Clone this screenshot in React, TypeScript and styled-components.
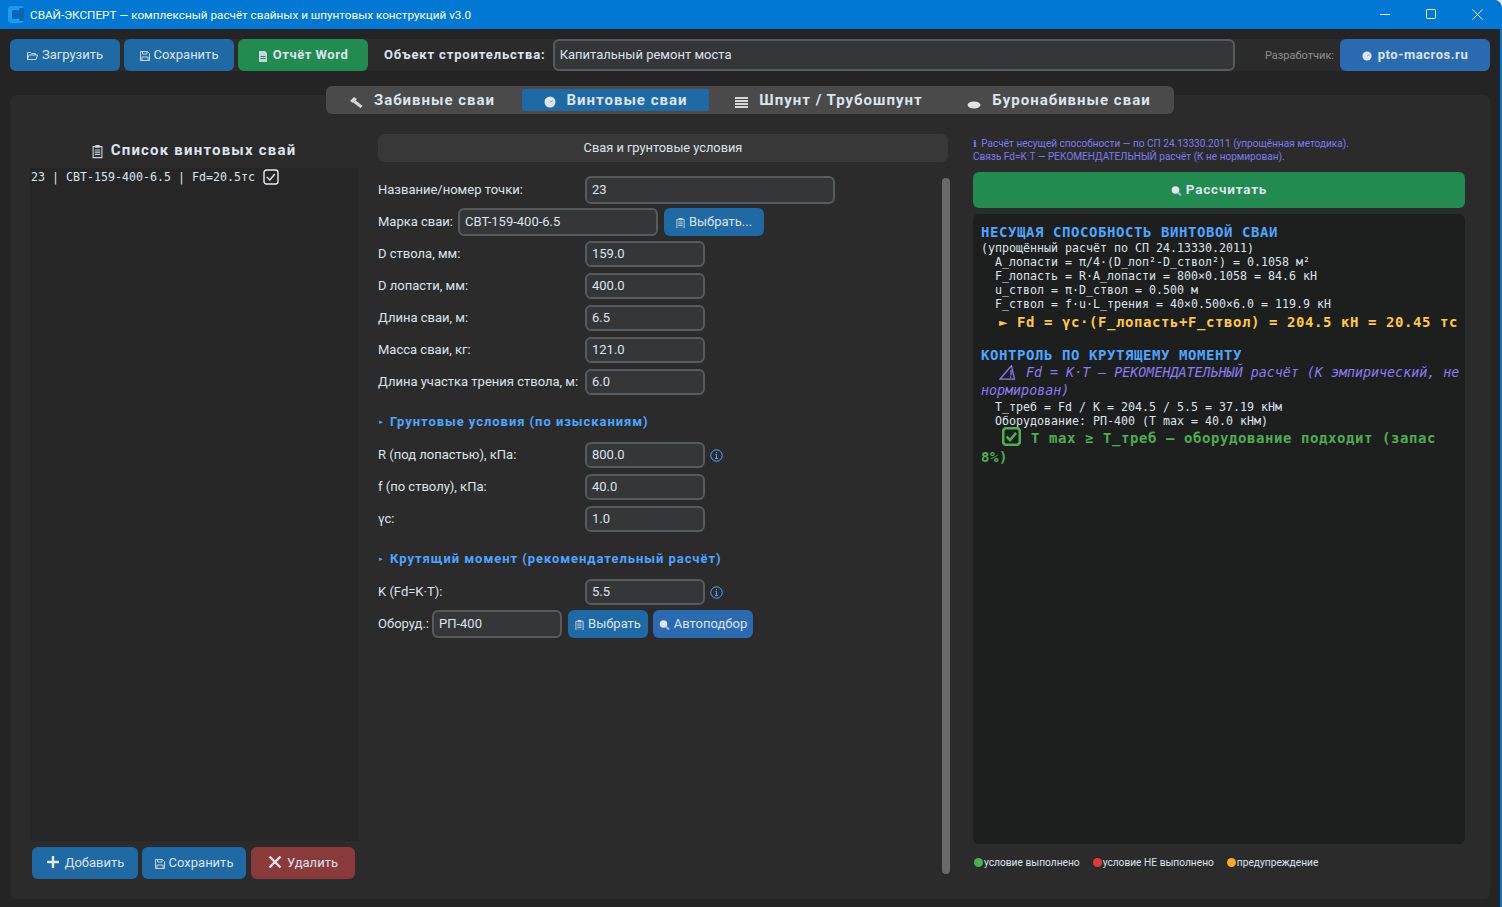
import styled, { createGlobalStyle } from "styled-components";

// Types
type ButtonTone = "blue" | "green" | "red" | "link";

// Global
const GlobalStyle = createGlobalStyle`
  html, body {
    margin: 0;
    padding: 0;
    background: #e8e8e8;
    overflow: hidden;
  }
  * {
    box-sizing: border-box;
  }
`;

const toneColors: Record<ButtonTone, string> = {
  blue: "#1f6aa5",
  green: "#228b4f",
  red: "#8b3a3a",
  link: "#2a6ab0",
};

// Window
const Window = styled.div`
  width: 1502px;
  height: 907px;
  display: flex;
  flex-direction: column;
  background: #242424;
  border-right: 2px solid #0078d4;
  border-top-right-radius: 8px;
  color: #dce4ee;
  font-family: Roboto, "Liberation Sans", sans-serif;
  font-size: 13px;
  overflow: hidden;
`;

const TitleBar = styled.div`
  height: 29px;
  flex: none;
  display: flex;
  align-items: center;
  background: #0078d4;
  color: #fff;
  font-size: 11.72px;
  padding-left: 8px;
`;

const TitleText = styled.span`
  margin-left: 6px;
  flex: 1;
`;

const WinControl = styled.div`
  width: 46px;
  height: 29px;
  display: flex;
  align-items: center;
  justify-content: center;
`;

// Toolbar
const Toolbar = styled.div`
  height: 32px;
  margin: 10px 10px 0 10px;
  flex: none;
  display: flex;
  align-items: center;
  background: #2b2b2b;
  border-radius: 6px;
`;

const Button = styled.button<{ $tone: ButtonTone; $w: number; $h?: number; $bold?: boolean; $gap?: number }>`
  width: ${(p) => p.$w}px;
  height: ${(p) => p.$h ?? 32}px;
  flex: none;
  display: flex;
  align-items: center;
  justify-content: center;
  gap: ${(p) => p.$gap ?? 4}px;
  padding: 0 0 2px;
  border: none;
  border-radius: 6px;
  background: ${(p) => toneColors[p.$tone]};
  color: #dce4ee;
  font-family: inherit;
  font-size: 13px;
  font-weight: ${(p) => (p.$bold ? 700 : 400)};
  letter-spacing: ${(p) => (p.$bold ? "0.55px" : "0")};
`;

const DeleteButton = styled(Button)`
  margin-left: 1px;
`;

const CalcButton = styled(Button)`
  font-size: 13.5px;
  letter-spacing: 0.8px;
`;

const Spacer = styled.div<{ $w: number }>`
  width: ${(p) => p.$w}px;
  flex: none;
`;

const ObjectLabel = styled.span`
  font-weight: 700;
  letter-spacing: 0.85px;
  margin-left: 16px;
  margin-right: 7px;
  padding-bottom: 2px;
  white-space: nowrap;
`;

const Input = styled.div<{ $w?: number; $h?: number }>`
  width: ${(p) => (p.$w ? `${p.$w}px` : "auto")};
  height: ${(p) => p.$h ?? 26}px;
  flex: ${(p) => (p.$w ? "none" : "1")};
  display: flex;
  align-items: center;
  padding: 0 5px 1px;
  background: #343638;
  border: 2px solid #565b5e;
  border-radius: 6px;
  color: #dce4ee;
`;

const DevLabel = styled.span`
  font-size: 11px;
  color: #8f8f8f;
  margin-left: 30px;
  margin-right: 6px;
`;

// Tabs
const TabBar = styled.div`
  height: 28px;
  width: 848px;
  flex: none;
  margin: 15px 0 -19px 326px;
  position: relative;
  z-index: 1;
  display: flex;
  align-items: center;
  gap: 4px;
  background: #4a4a4a;
  border-radius: 6px;
`;

const Tab = styled.div<{ $w: number; $active?: boolean }>`
  width: ${(p) => p.$w}px;
  height: 22px;
  flex: none;
  display: flex;
  align-items: center;
  justify-content: center;
  gap: 11px;
  border-radius: 2px;
  background: ${(p) => (p.$active ? "#1f6aa5" : "transparent")};
  font-size: 15px;
  font-weight: 700;
  letter-spacing: 1px;
`;

// Main panel
const MainPanel = styled.div`
  width: 1480px;
  height: 804px;
  margin-left: 10px;
  flex: none;
  background: #2b2b2b;
  border-radius: 6px;
  padding: 39px 25px 20px 20px;
  display: grid;
  grid-template-columns: 328px 575px 492px;
  column-gap: 20px;
`;

const Column = styled.div`
  display: flex;
  flex-direction: column;
  min-height: 0;
`;

// Left column
const ListTitle = styled.div`
  height: 34px;
  flex: none;
  display: flex;
  align-items: center;
  justify-content: center;
  gap: 8px;
  padding-bottom: 2px;
  font-size: 15px;
  font-weight: 700;
  letter-spacing: 1.2px;
`;

const PileList = styled.div`
  flex: 1;
  background: #262626;
  padding: 1px 1px;
`;

const PileItem = styled.div`
  display: flex;
  align-items: center;
  gap: 8px;
  height: 16px;
  font-family: "DejaVu Sans Mono", monospace;
  font-size: 11.64px;
`;

const ListButtons = styled.div`
  height: 32px;
  flex: none;
  margin-top: 6px;
  padding-left: 2px;
  display: flex;
  gap: 4px;
`;

// Middle column
const MiddleColumn = styled(Column)`
  padding-right: 3px;
`;

const SectionHeader = styled.div`
  width: 570px;
  height: 28px;
  flex: none;
  display: flex;
  align-items: center;
  justify-content: center;
  padding-bottom: 1px;
  background: #383838;
  border-radius: 6px;
  font-size: 12.8px;
`;

const ScrollArea = styled.div`
  flex: 1;
  display: flex;
  min-height: 0;
  padding-top: 15px;
`;

const Form = styled.div`
  flex: 1;
  display: flex;
  flex-direction: column;
  gap: 6px;
`;

const FieldRow = styled.div<{ $tall?: boolean }>`
  height: ${(p) => (p.$tall ? 28 : 26)}px;
  flex: none;
  display: flex;
  align-items: center;
  margin: ${(p) => (p.$tall ? "-1px 0" : "0")};
`;

const FieldLabel = styled.span<{ $w: number }>`
  width: ${(p) => p.$w}px;
  flex: none;
  padding-bottom: 1px;
  white-space: nowrap;
`;

const FormHeading = styled.div`
  height: 20px;
  flex: none;
  margin: 10px 0 5px;
  display: flex;
  align-items: center;
  gap: 6px;
  color: #4da6ff;
  font-weight: 700;
  letter-spacing: 0.95px;
`;

const HeadingArrow = styled.span`
  font-size: 6px;
  width: 6px;
`;

const ScrollThumb = styled.div`
  width: 8px;
  height: 696px;
  flex: none;
  margin-top: 1px;
  background: #6a6a6a;
  border-radius: 4px;
`;

// Right column
const InfoNote = styled.div`
  height: 38px;
  flex: none;
  padding-top: 3px;
  color: #7b7bf0;
  font-size: 10.05px;
  line-height: 13px;
`;

const InfoMark = styled.b`
  font-family: "DejaVu Serif", serif;
  margin-right: 2px;
`;

const ResultBox = styled.div`
  height: 630px;
  flex: none;
  margin-top: 6px;
  padding: 10px 4px 10px 8px;
  background: #1d1e1e;
  border-radius: 6px;
  font-family: "DejaVu Sans Mono", monospace;
  font-size: 11.64px;
`;

const ResultHeading = styled.div<{ $gap?: boolean }>`
  margin-top: ${(p) => (p.$gap ? 16 : 0)}px;
  margin-bottom: ${(p) => (p.$gap ? 0 : 1)}px;
  color: #4da6ff;
  font-size: 14px;
  font-weight: 700;
  letter-spacing: 0.57px;
  line-height: 16px;
`;

const ResultLine = styled.div<{ $indent?: boolean }>`
  height: 14px;
  line-height: 14px;
  padding-left: ${(p) => (p.$indent ? 14 : 0)}px;
  white-space: pre;
  color: #dce4ee;
`;

const ResultTotal = styled.div`
  margin-top: 2px;
  padding-left: 18px;
  color: #ffc845;
  font-size: 14px;
  font-weight: 700;
  letter-spacing: 0.57px;
  line-height: 18px;
  white-space: nowrap;
`;

const ResultWarning = styled.div`
  color: #8a7bf0;
  font-size: 13.33px;
  font-style: italic;
  line-height: 18px;
  margin-top: 1px;
  text-indent: 18px;
`;

const ResultOk = styled.div`
  color: #4caf50;
  font-size: 14px;
  font-weight: 700;
  letter-spacing: 0.57px;
  line-height: 19px;
  padding-top: 1px;
  padding-right: 4px;
  text-indent: 21px;
`;

const InlineGlyph = styled.span<{ $space: number }>`
  display: inline-block;
  vertical-align: -3px;
  margin: -6px ${(p) => p.$space}px -6px 0;
  text-indent: 0;
  line-height: 0;
`;

const Legend = styled.div`
  flex: 1;
  display: flex;
  align-items: center;
  font-size: 10.2px;
  gap: 13px;
  padding: 2px 0 0 1px;
`;

const LegendItem = styled.div`
  display: flex;
  align-items: center;
  gap: 1px;
`;

const LegendDot = styled.span<{ $color: string }>`
  width: 9px;
  height: 9px;
  flex: none;
  border-radius: 50%;
  background: ${(p) => p.$color};
`;

// Icons
const iconColor = "#c9d6e2";

const LowIcon = styled.svg`
  flex: none;
  margin-top: 4px;
`;

const BoreSvg = styled(LowIcon)`
  margin-top: 9px;
`;

const AppLogo = () => (
  <svg width="16" height="17" viewBox="0 0 16 17">
    <rect x="0" y="0" width="16" height="17" rx="4" fill="#1a9cf5" />
    <rect x="11" y="2" width="5" height="13" rx="1" fill="#0f62b0" />
    <rect x="4" y="4" width="7" height="9" rx="1.500" fill="#0a66bc" />
  </svg>
);

const FolderIcon = () => (
  <LowIcon width="11" height="10" viewBox="0 0 11 10" fill="none" stroke={iconColor} strokeWidth="1">
    <path d="M.5 8.500v-7h3l1 1h4v1.500M.5 8.500l1.500-4.500h8.500l-1.500 4.500z" />
  </LowIcon>
);

const SaveIcon = () => (
  <LowIcon width="10" height="10" viewBox="0 0 10 10" fill="none" stroke={iconColor} strokeWidth="1">
    <path d="M.5.500h7l2 2v7h-9z" />
    <path d="M2.500.500v2.500h4.500v-2.500M2 9.500v-3.500h6v3.500" />
  </LowIcon>
);

const DocIcon = () => (
  <LowIcon width="10" height="11" viewBox="0 0 10 11">
    <path d="M1 0h6l2 2v9H1z" fill={iconColor} />
    <path d="M2.500 5.500h5M2.500 7.500h5" stroke="#228b4f" strokeWidth="1" />
  </LowIcon>
);

const ClipboardIcon = ({ size = 9 }: { size?: number }) => (
  <LowIcon width={size} height={size * 1.2} viewBox="0 0 10 12">
    <path d="M1 1.500h8v10H1z" fill="none" stroke={iconColor} strokeWidth="1" />
    <rect x="3" y="0" width="4" height="2.500" fill={iconColor} />
    <path d="M2.500 4.500h5M2.500 6.500h5M2.500 8.500h5" stroke={iconColor} strokeWidth="1" />
  </LowIcon>
);

const HammerIcon = () => (
  <LowIcon width="14" height="12" viewBox="0 0 14 12">
    <path d="M1 5l4-4 3 2-4 4z" fill="#d8d8d8" />
    <path d="M5.500 5.500l7 5.500" stroke="#d8d8d8" strokeWidth="3" />
  </LowIcon>
);

const DiscIcon = ({ size = 12 }: { size?: number }) => (
  <LowIcon width={size} height={size} viewBox="0 0 12 12">
    <circle cx="6" cy="6" r="5.500" fill="#dfe6ee" />
    <path d="M6 6l3-1" stroke="#8aa0b4" strokeWidth="1" />
  </LowIcon>
);

const SheetIcon = () => (
  <LowIcon width="13" height="11" viewBox="0 0 13 11">
    <path d="M0 1h13M0 4h13M0 7h13M0 10h13" stroke="#d8d8d8" strokeWidth="2.200" />
  </LowIcon>
);

const BoreIcon = () => (
  <BoreSvg width="14" height="8" viewBox="0 0 14 8">
    <ellipse cx="7" cy="4" rx="6.500" ry="3.500" fill="#e4e4e4" />
  </BoreSvg>
);

const SearchIcon = () => (
  <LowIcon width="11" height="10" viewBox="0 0 11 10">
    <circle cx="4.500" cy="4" r="3.800" fill="#dfe6ee" />
    <path d="M7 6.500l3 3" stroke="#a8b8c6" strokeWidth="2" />
  </LowIcon>
);

const PlusIcon = () => (
  <svg width="14" height="14" viewBox="0 0 14 14">
    <path d="M7 1v12M1 7h12" stroke="#e4ecf4" strokeWidth="2.400" />
  </svg>
);

const CrossIcon = () => (
  <svg width="14" height="14" viewBox="0 0 14 14">
    <path d="M1.500 1.500l11 11M12.500 1.500l-11 11" stroke="#e8e4e8" strokeWidth="2.400" />
  </svg>
);

const InfoIcon = () => (
  <svg width="13" height="13" viewBox="0 0 13 13" fill="none" stroke="#4da6ff">
    <circle cx="6.500" cy="6.500" r="5.700" strokeWidth="1" />
    <path d="M6.500 5.500v4M5 9.500h3M5.300 5.500h1.200" strokeWidth="1" />
    <path d="M6.500 3v1.200" strokeWidth="1.200" />
  </svg>
);

const CheckBoxIcon = ({ size, color, weight }: { size: number; color: string; weight: number }) => (
  <svg width={size} height={size} viewBox="0 0 16 16" fill="none" stroke={color}>
    <rect x="1" y="1" width="14" height="14" rx="2.500" strokeWidth={weight} />
    <path d="M3.800 8l3 3 5-6" strokeWidth={weight} />
  </svg>
);

const WarnIcon = () => (
  <svg width="17" height="15" viewBox="0 0 17 15" fill="none" stroke="#8a7bf0" strokeWidth="1.300">
    <path d="M12.500.800L.800 14.200h14.700z" />
    <path d="M12 5v5.500M11.700 11.500v1.500" />
  </svg>
);

const App = () => (
  <Window>
    <GlobalStyle />
    <TitleBar>
      <AppLogo />
      <TitleText>СВАЙ-ЭКСПЕРТ — комплексный расчёт свайных и шпунтовых конструкций v3.0</TitleText>
      <WinControl>
        <svg width="11" height="11" viewBox="0 0 11 11">
          <path d="M0 5.500h10" stroke="#fff" strokeWidth="1" />
        </svg>
      </WinControl>
      <WinControl>
        <svg width="11" height="11" viewBox="0 0 11 11" fill="none">
          <rect x=".5" y=".5" width="9" height="9" rx="1" stroke="#fff" />
        </svg>
      </WinControl>
      <WinControl>
        <svg width="11" height="11" viewBox="0 0 11 11">
          <path d="M.5.500l10 10M10.500.500l-10 10" stroke="#fff" strokeWidth="1" />
        </svg>
      </WinControl>
    </TitleBar>

    <Toolbar>
      <Button $tone="blue" $w={110}>
        <FolderIcon /> Загрузить
      </Button>
      <Spacer $w={4} />
      <Button $tone="blue" $w={110}>
        <SaveIcon /> Сохранить
      </Button>
      <Spacer $w={4} />
      <Button $tone="green" $w={130} $bold $gap={5}>
        <DocIcon /> Отчёт Word
      </Button>
      <ObjectLabel>Объект строительства:</ObjectLabel>
      <Input $h={32}>Капитальный ремонт моста</Input>
      <DevLabel>Разработчик:</DevLabel>
      <Button $tone="link" $w={150} $bold $gap={6}>
        <DiscIcon size={10} /> pto-macros.ru
      </Button>
    </Toolbar>

    <TabBar>
      <Tab $w={192}>
        <HammerIcon /> Забивные сваи
      </Tab>
      <Tab $w={187} $active>
        <DiscIcon /> Винтовые сваи
      </Tab>
      <Tab $w={232}>
        <SheetIcon /> Шпунт / Трубошпунт
      </Tab>
      <Tab $w={220}>
        <BoreIcon /> Буронабивные сваи
      </Tab>
    </TabBar>

    <MainPanel>
      <Column>
        <ListTitle>
          <ClipboardIcon size={11} /> Список винтовых свай
        </ListTitle>
        <PileList>
          <PileItem>
            23 | СВТ-159-400-6.5 | Fd=20.5тс
            <CheckBoxIcon size={16} color="#e8edf2" weight={1.4} />
          </PileItem>
        </PileList>
        <ListButtons>
          <Button $tone="blue" $w={106} $gap={5}>
            <PlusIcon /> Добавить
          </Button>
          <Button $tone="blue" $w={104}>
            <SaveIcon /> Сохранить
          </Button>
          <DeleteButton $tone="red" $w={104} $gap={5}>
            <CrossIcon /> Удалить
          </DeleteButton>
        </ListButtons>
      </Column>

      <MiddleColumn>
        <SectionHeader>Свая и грунтовые условия</SectionHeader>
        <ScrollArea>
          <Form>
            <FieldRow $tall>
              <FieldLabel $w={207}>Название/номер точки:</FieldLabel>
              <Input $w={250} $h={28}>23</Input>
            </FieldRow>
            <FieldRow $tall>
              <FieldLabel $w={80}>Марка сваи:</FieldLabel>
              <Input $w={200} $h={28}>СВТ-159-400-6.5</Input>
              <Spacer $w={6} />
              <Button $tone="blue" $w={100} $h={28}>
                <ClipboardIcon /> Выбрать...
              </Button>
            </FieldRow>
            <FieldRow>
              <FieldLabel $w={207}>D ствола, мм:</FieldLabel>
              <Input $w={120}>159.0</Input>
            </FieldRow>
            <FieldRow>
              <FieldLabel $w={207}>D лопасти, мм:</FieldLabel>
              <Input $w={120}>400.0</Input>
            </FieldRow>
            <FieldRow>
              <FieldLabel $w={207}>Длина сваи, м:</FieldLabel>
              <Input $w={120}>6.5</Input>
            </FieldRow>
            <FieldRow>
              <FieldLabel $w={207}>Масса сваи, кг:</FieldLabel>
              <Input $w={120}>121.0</Input>
            </FieldRow>
            <FieldRow>
              <FieldLabel $w={207}>Длина участка трения ствола, м:</FieldLabel>
              <Input $w={120}>6.0</Input>
            </FieldRow>

            <FormHeading>
              <HeadingArrow>►</HeadingArrow> Грунтовые условия (по изысканиям)
            </FormHeading>
            <FieldRow>
              <FieldLabel $w={207}>R (под лопастью), кПа:</FieldLabel>
              <Input $w={120}>800.0</Input>
              <Spacer $w={5} />
              <InfoIcon />
            </FieldRow>
            <FieldRow>
              <FieldLabel $w={207}>f (по стволу), кПа:</FieldLabel>
              <Input $w={120}>40.0</Input>
            </FieldRow>
            <FieldRow>
              <FieldLabel $w={207}>γс:</FieldLabel>
              <Input $w={120}>1.0</Input>
            </FieldRow>

            <FormHeading>
              <HeadingArrow>►</HeadingArrow> Крутящий момент (рекомендательный расчёт)
            </FormHeading>
            <FieldRow>
              <FieldLabel $w={207}>K (Fd=K·T):</FieldLabel>
              <Input $w={120}>5.5</Input>
              <Spacer $w={5} />
              <InfoIcon />
            </FieldRow>
            <FieldRow $tall>
              <FieldLabel $w={54}>Оборуд.:</FieldLabel>
              <Input $w={130} $h={28}>РП-400</Input>
              <Spacer $w={6} />
              <Button $tone="blue" $w={80} $h={28}>
                <ClipboardIcon /> Выбрать
              </Button>
              <Spacer $w={5} />
              <Button $tone="link" $w={100} $h={28}>
                <SearchIcon /> Автоподбор
              </Button>
            </FieldRow>
          </Form>
          <ScrollThumb />
        </ScrollArea>
      </MiddleColumn>

      <Column>
        <InfoNote>
          <InfoMark>i</InfoMark> Расчёт несущей способности — по СП 24.13330.2011 (упрощённая методика).
          <br />
          Связь Fd=K·T — РЕКОМЕНДАТЕЛЬНЫЙ расчёт (К не нормирован).
        </InfoNote>
        <CalcButton $tone="green" $w={492} $h={36} $bold>
          <SearchIcon /> Рассчитать
        </CalcButton>
        <ResultBox>
          <ResultHeading>НЕСУЩАЯ СПОСОБНОСТЬ ВИНТОВОЙ СВАИ</ResultHeading>
          <ResultLine>(упрощённый расчёт по СП 24.13330.2011)</ResultLine>
          <ResultLine $indent>A_лопасти = π/4·(D_лоп²-D_ствол²) = 0.1058 м²</ResultLine>
          <ResultLine $indent>F_лопасть = R·A_лопасти = 800×0.1058 = 84.6 кН</ResultLine>
          <ResultLine $indent>u_ствол = π·D_ствол = 0.500 м</ResultLine>
          <ResultLine $indent>F_ствол = f·u·L_трения = 40×0.500×6.0 = 119.9 кН</ResultLine>
          <ResultTotal>► Fd = γс·(F_лопасть+F_ствол) = 204.5 кН = 20.45 тс</ResultTotal>
          <ResultHeading $gap>КОНТРОЛЬ ПО КРУТЯЩЕМУ МОМЕНТУ</ResultHeading>
          <ResultWarning>
            <InlineGlyph $space={10}>
              <WarnIcon />
            </InlineGlyph>
            Fd = K·T — РЕКОМЕНДАТЕЛЬНЫЙ расчёт (К эмпирический, не нормирован)
          </ResultWarning>
          <ResultLine $indent>T_треб = Fd / K = 204.5 / 5.5 = 37.19 кНм</ResultLine>
          <ResultLine $indent>Оборудование: РП-400 (T max = 40.0 кНм)</ResultLine>
          <ResultOk>
            <InlineGlyph $space={10}>
              <CheckBoxIcon size={19} color="#4caf50" weight={2.2} />
            </InlineGlyph>
            T max ≥ T_треб — оборудование подходит (запас 8%)
          </ResultOk>
        </ResultBox>
        <Legend>
          <LegendItem>
            <LegendDot $color="#4caf50" />
            условие выполнено
          </LegendItem>
          <LegendItem>
            <LegendDot $color="#e53935" />
            условие НЕ выполнено
          </LegendItem>
          <LegendItem>
            <LegendDot $color="#ffa726" />
            предупреждение
          </LegendItem>
        </Legend>
      </Column>
    </MainPanel>
  </Window>
);

export default App;
